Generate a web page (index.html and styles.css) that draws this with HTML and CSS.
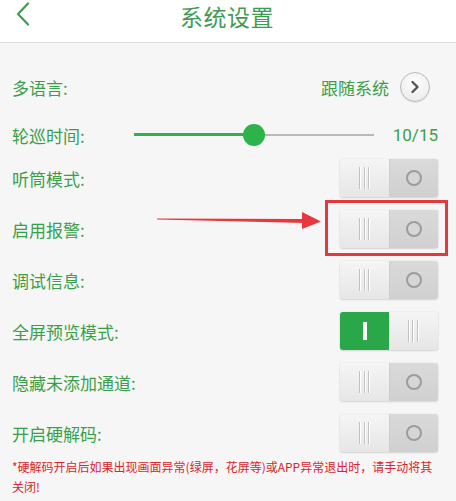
FILE: index.html
```html
<!DOCTYPE html>
<html lang="zh-CN">
<head>
    <meta charset="UTF-8">
    <meta name="viewport" content="width=device-width, initial-scale=1.0">
    <title>系统设置</title>
    <link rel="stylesheet" href="styles.css">
</head>
<body>
    <!-- Top bar with back button and page title -->
    <div class="top-bar">
        <svg class="back-icon" width="16" height="24" viewBox="0 0 16 24">
            <polyline points="13,1.5 3,12 13,22.5" fill="none" stroke="#3f9b52" stroke-width="2.2" stroke-linecap="round" stroke-linejoin="round"/>
        </svg>
        <div class="top-title">系统设置</div>
    </div>

    <div class="settings">
        <!-- Language -->
        <div class="row row-tall">
            <span class="label">多语言:</span>
            <span class="lang-value">跟随系统</span>
            <span class="more-button">
                <svg width="14" height="14" viewBox="0 0 14 14">
                    <polyline points="4.5,2 9.5,7 4.5,12" fill="none" stroke="#555" stroke-width="2.4" stroke-linecap="round" stroke-linejoin="round"/>
                </svg>
            </span>
        </div>

        <!-- Patrol interval slider -->
        <div class="row row-tall">
            <span class="label slider-label">轮巡时间:</span>
            <div class="slider">
                <div class="slider-track"></div>
                <div class="slider-fill" style="width: 50%"></div>
                <div class="slider-thumb" style="left: 50%"></div>
            </div>
            <span class="slider-value">10/15</span>
        </div>

        <!-- Switches -->
        <div class="row">
            <span class="label">听筒模式:</span>
            <div class="toggle">
                <span class="toggle-half toggle-grip"><i class="grip-lines"></i></span>
                <span class="toggle-half toggle-knob"><i class="knob-ring"></i></span>
            </div>
        </div>

        <div class="row">
            <span class="label">启用报警:</span>
            <div class="toggle marked">
                <span class="toggle-half toggle-grip"><i class="grip-lines"></i></span>
                <span class="toggle-half toggle-knob"><i class="knob-ring"></i></span>
            </div>
        </div>

        <div class="row">
            <span class="label">调试信息:</span>
            <div class="toggle">
                <span class="toggle-half toggle-grip"><i class="grip-lines"></i></span>
                <span class="toggle-half toggle-knob"><i class="knob-ring"></i></span>
            </div>
        </div>

        <div class="row">
            <span class="label">全屏预览模式:</span>
            <div class="toggle on">
                <span class="toggle-half toggle-active"><i class="active-bar"></i></span>
                <span class="toggle-half toggle-grip"><i class="grip-lines"></i></span>
            </div>
        </div>

        <div class="row">
            <span class="label">隐藏未添加通道:</span>
            <div class="toggle">
                <span class="toggle-half toggle-grip"><i class="grip-lines"></i></span>
                <span class="toggle-half toggle-knob"><i class="knob-ring"></i></span>
            </div>
        </div>

        <div class="row">
            <span class="label">开启硬解码:</span>
            <div class="toggle">
                <span class="toggle-half toggle-grip"><i class="grip-lines"></i></span>
                <span class="toggle-half toggle-knob"><i class="knob-ring"></i></span>
            </div>
        </div>

        <p class="note">*硬解码开启后如果出现画面异常(绿屏，花屏等)或APP异常退出时，请手动将其关闭!</p>
    </div>

    <!-- Red pointer arrow -->
    <svg class="pointer" width="180" height="30" viewBox="0 0 180 30">
        <polygon points="7,13.5 155,14 155,18 7,14.5" fill="#e8383d"/>
        <polygon points="152,7 171,16.5 152,24" fill="#e8383d"/>
    </svg>
</body>
</html>
```

FILE: styles.css
```css
/* Page base */
body {
    margin: 0;
    padding: 0;
    background: #f6f6f6;
    font-family: "Noto Sans CJK SC", "Noto Sans", sans-serif;
    position: relative;
}

/* Top bar */
.top-bar {
    height: 31px;
    padding-bottom: 11px;
    background: #ffffff;
    border-bottom: 1px solid #dddddd;
    display: flex;
    align-items: center;
    justify-content: center;
    position: relative;
}

.back-icon {
    position: absolute;
    left: 15px;
    top: 2px;
}

.top-title {
    font-size: 23px;
    color: #3f9b52;
    letter-spacing: 0.5px;
    margin-left: -2px;
}

/* Settings list */
.settings {
    padding: 20px 18px 0 12px;
    display: flex;
    flex-direction: column;
    gap: 13px;
}

.row {
    display: flex;
    align-items: center;
    height: 38px;
}

.row-tall {
    height: 48px;
    margin-bottom: -13px;
}

.label {
    font-size: 17px;
    color: #3a9f4a;
    flex: 1;
}

/* Language selector */
.lang-value {
    font-size: 17px;
    color: #3a9f4a;
    margin-right: 11px;
}

.more-button {
    width: 28px;
    height: 28px;
    border: 1px solid #b9b9b9;
    border-radius: 50%;
    background: radial-gradient(circle at 50% 35%, #ffffff 0%, #eeeeee 70%, #e2e2e2 100%);
    display: flex;
    align-items: center;
    justify-content: center;
    margin-right: 8px;
    box-shadow: 0 1px 1px rgba(0, 0, 0, 0.08);
}

/* Slider */
.slider-label {
    flex: none;
    width: 122px;
}

.slider {
    flex: 1;
    height: 24px;
    position: relative;
}

.slider-track {
    position: absolute;
    left: 0;
    right: 0;
    top: 11px;
    height: 2px;
    background: #b8b8b8;
}

.slider-fill {
    position: absolute;
    left: 0;
    top: 10px;
    height: 3px;
    background: #2fb14b;
}

.slider-thumb {
    position: absolute;
    top: 1px;
    width: 22px;
    height: 22px;
    margin-left: -11px;
    border-radius: 50%;
    background: #2cb44a;
}

.slider-value {
    font-family: Roboto, "Noto Sans", sans-serif;
    font-size: 17px;
    color: #3a9f4a;
    margin-left: 19px;
}

/* Two-part switch */
.toggle {
    width: 98px;
    height: 38px;
    display: flex;
    border-radius: 3px;
    overflow: hidden;
    box-shadow: 0 0 1px rgba(0, 0, 0, 0.25), 0 1px 2px rgba(0, 0, 0, 0.12);
    position: relative;
}

.toggle-half {
    flex: 1;
    display: flex;
    align-items: center;
    justify-content: center;
}

.toggle-grip {
    background: linear-gradient(#f5f5f5, #e6e6e6);
}

.toggle-knob {
    background: linear-gradient(#dadada, #d0d0d0);
    border-left: 1px solid #cdcdcd;
}

.toggle-active {
    background: #2aa748;
}

.grip-lines {
    width: 11px;
    height: 22px;
    background: repeating-linear-gradient(90deg, #c2c2c2 0 1px, #ffffff 1px 2px, transparent 2px 4.5px);
}

.knob-ring {
    width: 12px;
    height: 12px;
    border: 2px solid #9c9c9c;
    border-radius: 50%;
    background: #d6d6d6;
}

.active-bar {
    width: 4px;
    height: 18px;
    background: #ffffff;
}

/* Highlight frame around a switch */
.toggle.marked {
    overflow: visible;
}

.toggle.marked::after {
    content: "";
    position: absolute;
    left: -15px;
    right: -10px;
    top: -10px;
    bottom: -8px;
    border: 3px solid #e2393d;
}

/* Warning note */
.note {
    margin: -8px 0 0;
    font-size: 12px;
    line-height: 20px;
    color: #d9262c;
}

/* Arrow drawn over the list */
.pointer {
    position: absolute;
    left: 150px;
    top: 205px;
}
```
